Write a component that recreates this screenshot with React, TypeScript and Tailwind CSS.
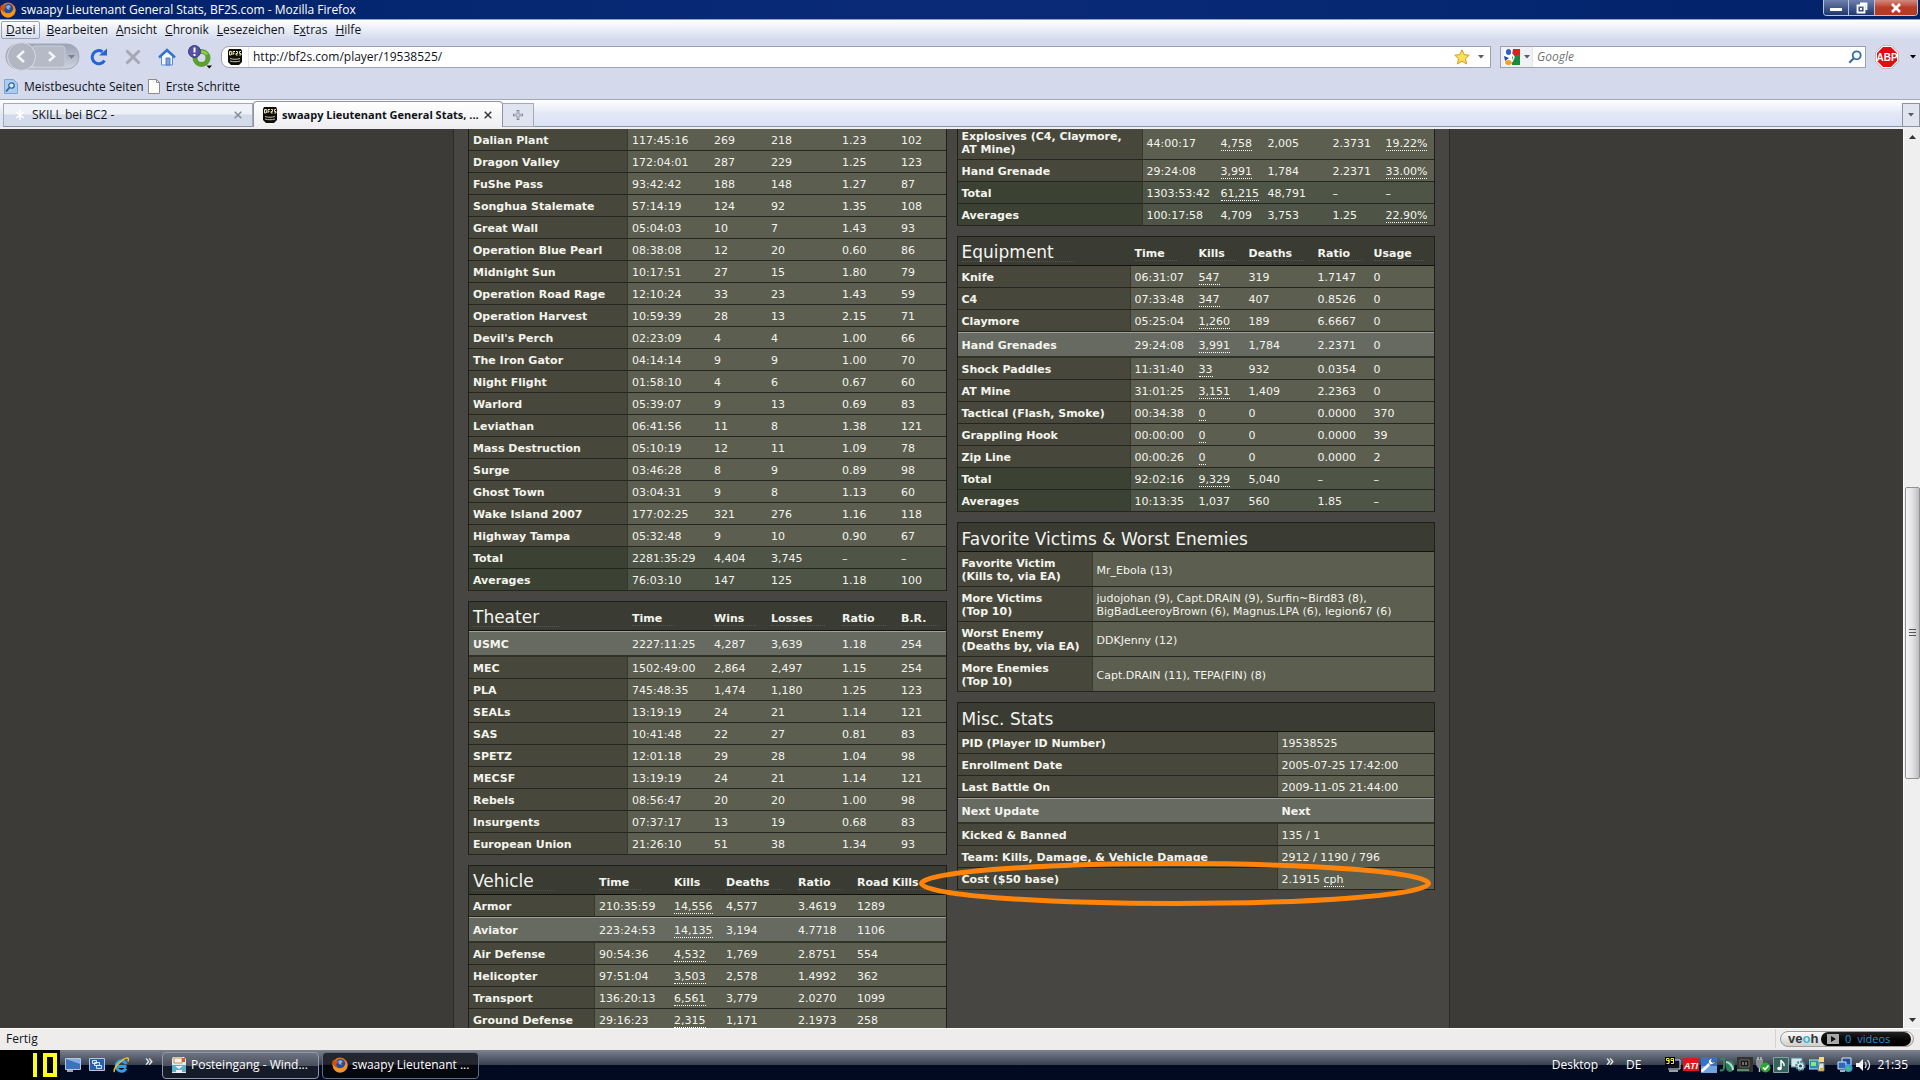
import React from "react";

type Cell = string;
type Row = { name: string; cells: Cell[]; kind?: "hot" | "sum"; linked?: number[]; bold?: boolean };

const rows = (text: string): Row[] =>
  text
    .trim()
    .split("\n")
    .map((line) => {
      const [name, ...rest] = line.trim().split("|");
      const kind = name.startsWith("*") ? "hot" : name.startsWith("+") ? "sum" : undefined;
      const linked: number[] = [];
      const cells = rest.map((c, i) => {
        if (c.startsWith("_")) {
          linked.push(i);
          return c.slice(1);
        }
        return c;
      });
      return { name: name.replace(/^[*+]/, ""), cells, kind, linked };
    });

const maps = rows(`
Dalian Plant|117:45:16|269|218|1.23|102
Dragon Valley|172:04:01|287|229|1.25|123
FuShe Pass|93:42:42|188|148|1.27|87
Songhua Stalemate|57:14:19|124|92|1.35|108
Great Wall|05:04:03|10|7|1.43|93
Operation Blue Pearl|08:38:08|12|20|0.60|86
Midnight Sun|10:17:51|27|15|1.80|79
Operation Road Rage|12:10:24|33|23|1.43|59
Operation Harvest|10:59:39|28|13|2.15|71
Devil's Perch|02:23:09|4|4|1.00|66
The Iron Gator|04:14:14|9|9|1.00|70
Night Flight|01:58:10|4|6|0.67|60
Warlord|05:39:07|9|13|0.69|83
Leviathan|06:41:56|11|8|1.38|121
Mass Destruction|05:10:19|12|11|1.09|78
Surge|03:46:28|8|9|0.89|98
Ghost Town|03:04:31|9|8|1.13|60
Wake Island 2007|177:02:25|321|276|1.16|118
Highway Tampa|05:32:48|9|10|0.90|67
+Total|2281:35:29|4,404|3,745|–|–
+Averages|76:03:10|147|125|1.18|100`);

const theater = rows(`
*USMC|2227:11:25|4,287|3,639|1.18|254
MEC|1502:49:00|2,864|2,497|1.15|254
PLA|745:48:35|1,474|1,180|1.25|123
SEALs|13:19:19|24|21|1.14|121
SAS|10:41:48|22|27|0.81|83
SPETZ|12:01:18|29|28|1.04|98
MECSF|13:19:19|24|21|1.14|121
Rebels|08:56:47|20|20|1.00|98
Insurgents|07:37:17|13|19|0.68|83
European Union|21:26:10|51|38|1.34|93`);

const vehicle = rows(`
Armor|210:35:59|_14,556|4,577|3.4619|1289
*Aviator|223:24:53|_14,135|3,194|4.7718|1106
Air Defense|90:54:36|_4,532|1,769|2.8751|554
Helicopter|97:51:04|_3,503|2,578|1.4992|362
Transport|136:20:13|_6,561|3,779|2.0270|1099
Ground Defense|29:16:23|_2,315|1,171|2.1973|258`);

const weapons = rows(`
Explosives (C4, Claymore, AT Mine)|44:00:17|_4,758|2,005|2.3731|_19.22%
Hand Grenade|29:24:08|_3,991|1,784|2.2371|_33.00%
+Total|1303:53:42|_61,215|48,791|–|–
+Averages|100:17:58|4,709|3,753|1.25|_22.90%`);

const equipment = rows(`
Knife|06:31:07|_547|319|1.7147|0
C4|07:33:48|_347|407|0.8526|0
Claymore|05:25:04|_1,260|189|6.6667|0
*Hand Grenades|29:24:08|_3,991|1,784|2.2371|0
Shock Paddles|11:31:40|_33|932|0.0354|0
AT Mine|31:01:25|_3,151|1,409|2.2363|0
Tactical (Flash, Smoke)|00:34:38|_0|0|0.0000|370
Grappling Hook|00:00:00|_0|0|0.0000|39
Zip Line|00:00:26|_0|0|0.0000|2
+Total|92:02:16|_9,329|5,040|–|–
+Averages|10:13:35|1,037|560|1.85|–`);

const victims = rows(`
Favorite Victim\\(Kills to, via EA)|Mr_Ebola (13)
More Victims\\(Top 10)|judojohan (9), Capt.DRAIN (9), Surfin~Bird83 (8),\\BigBadLeeroyBrown (6), Magnus.LPA (6), legion67 (6)
Worst Enemy\\(Deaths by, via EA)|DDKJenny (12)
More Enemies\\(Top 10)|Capt.DRAIN (11), TEPA(FIN) (8)`);

const misc = rows(`
PID (Player ID Number)|19538525
Enrollment Date|2005-07-25 17:42:00
Last Battle On|2009-11-05 21:44:00
*Next Update|Next
Kicked & Banned|135 / 1
Team: Kills, Damage, & Vehicle Damage|2912 / 1190 / 796
Cost ($50 base)|2.1915 cph`);

const lines = (t: string) =>
  t.split("\\").map((part, i) => (
    <React.Fragment key={i}>
      {i > 0 && <br />}
      {part}
    </React.Fragment>
  ));

const Dotted = ({ children }: { children: React.ReactNode }) => (
  <a href="#" className="border-b border-dotted border-white">
    {children}
  </a>
);

function cellContent(row: Row, i: number) {
  const t = row.cells[i];
  if (row.linked?.includes(i)) return <Dotted>{t}</Dotted>;
  if (t.endsWith(" cph"))
    return (
      <>
        {t.replace("cph", "")}
        <Dotted>cph</Dotted>
      </>
    );
  if (t === "Next") return <b>{t}</b>;
  return lines(t);
}

function StatTable({
  title,
  heads,
  widths,
  data,
  sortable = true,
}: {
  title?: string;
  heads?: string[];
  widths: string[];
  data: Row[];
  sortable?: boolean;
}) {
  return (
    <table className="w-full table-fixed border-separate border-spacing-0 border-x border-t border-[#1e1f1b] text-[11px] leading-[13px] text-[#f4f4ee]">
      <colgroup>
        {widths.map((w, i) => (
          <col key={i} className={w} />
        ))}
      </colgroup>
      {title && (
        <thead>
          <tr className="h-[29px] bg-[#3a3c34] text-left">
            <th
              colSpan={heads ? 1 : 2}
              className="border-b border-[#12130f] px-1 pb-[3px] align-bottom text-[17px] leading-[17px] font-normal whitespace-nowrap"
            >
              {sortable ? (
                <a href="#" className="inline-block border-b border-dotted border-[#54574d] pr-5 align-bottom">
                  {title}
                </a>
              ) : (
                title
              )}
            </th>
            {heads?.map((h) => (
              <th key={h} className="border-b border-[#12130f] pb-1 pl-1 align-bottom font-bold whitespace-nowrap">
                <a href="#" className="inline-block border-b border-dotted border-[#54574d] pr-3 align-bottom">
                  {h}
                </a>
              </th>
            ))}
          </tr>
        </thead>
      )}
      <tbody>
        {data.map((r) => {
          const hot = r.kind === "hot";
          const sum = r.kind === "sum";
          return (
            <tr key={r.name} className={hot ? "h-[26px] bg-[#676a61]" : "h-[22px]"}>
              <th
                scope="row"
                className={
                  "px-1 text-left align-middle font-bold " +
                  (hot
                    ? "border-t border-b-2 border-t-[#a0a29a] border-b-[#30322a] pt-0.5"
                    : sum
                      ? "border-r border-b border-[#23251e] border-r-[#34392d] bg-[#3b4133] pt-[5px] pb-[3px]"
                      : "border-r border-b border-[#23251e] border-r-[#373930] bg-[#47483b] pt-[5px] pb-[3px]")
                }
              >
                {lines(r.name)}
              </th>
              {r.cells.map((_, i) => (
                <td
                  key={i}
                  className={
                    "pt-0.5 pl-1 align-middle whitespace-nowrap " +
                    (hot
                      ? "border-t border-b-2 border-t-[#a0a29a] border-b-[#30322a]"
                      : sum
                        ? "border-b border-[#23251e] bg-[#4f5546]"
                        : "border-b border-[#23251e] bg-[#5c5e50]")
                  }
                >
                  {cellContent(r, i)}
                </td>
              ))}
            </tr>
          );
        })}
      </tbody>
    </table>
  );
}

const FirefoxIcon = () => (
  <svg className="size-4 shrink-0" viewBox="0 0 16 16">
    <circle cx="8" cy="8" r="7.5" fill="#e0701a" />
    <circle cx="8.4" cy="6.8" r="4.8" fill="#2a4d92" />
    <path d="M6 4l3-1 2 2-2 1 1 2-3-1z" fill="#7fb2e0" />
    <path d="M1 3c0 5 1 6 3 7 3 2 7 2 9-2 1-2 1-4 .5-5C17 7 16 13 11 15 5 17-1 12 1 3z" fill="#f39320" />
    <path d="M1 3c1 1 3 0 4 1l1 2-2 1 1 3C2 10 0 7 1 3z" fill="#d4500e" />
  </svg>
);

const SiteIcon = () => (
  <svg className="size-4 shrink-0" viewBox="0 0 16 16">
    <path d="M1 2l1-2h12l1 2v11l-3 3H4l-3-3z" fill="#0d0c06" />
    <path d="M2.500 6V2.500h2L4 4l.8 1-.8 1zM6 6V2.500h2M6 4.300h1.500M9 2.500h1.500v2H9V6h1.700M14 2.500h-1.500v2H14V6h-1.700" fill="none" stroke="#efe8b4" strokeWidth="1" />
    <path d="M3 9.500c3 1 7 1 10 0M3 12c3 1 7 1 10 0" fill="none" stroke="#d9d6c0" strokeWidth=".9" />
  </svg>
);

const Caret = ({ className = "text-[#555a66]" }: { className?: string }) => (
  <svg className={"h-1 w-1.5 shrink-0 " + className} viewBox="0 0 6 4">
    <path d="M0 0h6L3 3.500z" fill="currentColor" />
  </svg>
);

const Cross = ({ className }: { className: string }) => (
  <svg className={"size-2 " + className} viewBox="0 0 8 8">
    <path d="M.7.700l6.600 6.600M7.300.700L.7 7.300" stroke="currentColor" strokeWidth="1.500" />
  </svg>
);

function TitleBar() {
  return (
    <header className="flex h-5 shrink-0 items-start justify-between border-b border-[#8fa5cf] bg-gradient-to-r from-[#02236a] via-[#0a2a78] to-[#02236a]">
      <div className="flex items-center gap-[5px] pt-px text-[12px] leading-[18px] text-white">
        <FirefoxIcon />
        <h1>swaapy Lieutenant General Stats, BF2S.com - Mozilla Firefox</h1>
      </div>
      <div className="mr-0.5 flex h-4 overflow-hidden rounded-b border-x border-b border-[#b8c3dc]">
        <button aria-label="Minimieren" className="flex w-[25px] items-end justify-center border-r border-[#b8c3dc] bg-gradient-to-b from-[#6f80ad] to-[#1d376f] pb-1">
          <span className="h-[3px] w-3 bg-white" />
        </button>
        <button aria-label="Verkleinern" className="flex w-[26px] items-center justify-center border-r border-[#b8c3dc] bg-gradient-to-b from-[#6f80ad] to-[#1d376f]">
          <svg className="size-3" viewBox="0 0 12 12">
            <path d="M4 1.500h6.500V8M1.500 3.500h7v7h-7z" fill="none" stroke="#fff" strokeWidth="1.800" />
            <path d="M4 6h2v2H4z" fill="#fff" />
          </svg>
        </button>
        <button aria-label="Schließen" className="flex w-[42px] items-center justify-center bg-gradient-to-b from-[#d38a7f] via-[#bb3c28] to-[#b53a20] text-white">
          <svg className="h-2.5 w-3" viewBox="0 0 12 10">
            <path d="M2 1l8 8M10 1L2 9" stroke="#fff" strokeWidth="2.600" />
          </svg>
        </button>
      </div>
    </header>
  );
}

function MenuBar() {
  const items: [string, string, string][] = [
    ["", "D", "atei"],
    ["", "B", "earbeiten"],
    ["", "A", "nsicht"],
    ["", "C", "hronik"],
    ["", "L", "esezeichen"],
    ["E", "x", "tras"],
    ["", "H", "ilfe"],
  ];
  return (
    <nav className="flex h-5 items-center bg-gradient-to-b from-white via-[#e9edf7] to-[#d3d9ec] pl-px text-[12px] leading-4">
      {items.map(([a, b, c], i) => (
        <button
          key={c}
          className={
            i === 0
              ? "mr-0.5 rounded-xs border border-[#9aa0ac] px-1"
              : "px-1"
          }
        >
          {a}
          <u>{b}</u>
          {c}
        </button>
      ))}
    </nav>
  );
}

function NavBar() {
  return (
    <div className="flex h-[34px] items-center pr-1 pb-px">
      <svg className="ml-0.5 h-[30px] w-[78px] shrink-0" viewBox="0 0 78 30" role="img" aria-label="Zurück und Vor">
        <defs>
          <linearGradient id="pill" x1="0" y1="0" x2="0" y2="1">
            <stop offset="0" stopColor="#9ea3b3" />
            <stop offset=".5" stopColor="#b4b9c8" />
            <stop offset="1" stopColor="#cfd4e2" />
          </linearGradient>
        </defs>
        <rect x="4" y="2" width="73" height="25" rx="12" fill="url(#pill)" stroke="#a4a9b8" />
        <rect x="30" y="4" width="33" height="21" rx="3" fill="#b5bac7" stroke="#c6cbd8" />
        <circle cx="19.500" cy="14.500" r="14" fill="#b2b6c2" stroke="#d7dbe6" strokeWidth="1" />
        <path d="M22 9l-6 5.500 6 5.500M47 10l5 4.500-5 4.500" fill="none" stroke="#f3f5fa" strokeWidth="2.500" />
        <path d="M66 13h7l-3.500 4z" fill="#7d8292" />
      </svg>
      <button aria-label="Neu laden" className="ml-2.5">
        <svg className="size-[18px]" viewBox="0 0 18 18">
          <path d="M14.500 12.500A6.600 6.600 0 1 1 12.500 3.700" fill="none" stroke="#2464d8" strokeWidth="3" />
          <path d="M9 7.500h8V.5z" fill="#2464d8" />
        </svg>
      </button>
      <button aria-label="Stopp" className="ml-[17px]">
        <svg className="size-4" viewBox="0 0 16 16">
          <path d="M1.500 1.500l13 13M14.500 1.500l-13 13" stroke="#a5a9b4" strokeWidth="3" />
        </svg>
      </button>
      <button aria-label="Startseite" className="ml-[17px]">
        <svg className="size-[18px]" viewBox="0 0 18 18">
          <path d="M3.500 8v9h11V8L9 3.500z" fill="#f4f8fe" stroke="#5d8cc9" />
          <path d="M1 9.500L9 2l8 7.500" fill="none" stroke="#3674c9" strokeWidth="2.400" />
          <path d="M8 10h4v7H8z" fill="#7ba6dd" stroke="#3d6fb8" strokeWidth=".8" />
        </svg>
      </button>
      <button aria-label="ICQ" className="ml-3">
        <svg className="h-6 w-6" viewBox="0 0 24 24">
          <circle cx="13.500" cy="13" r="6.500" fill="none" stroke="#5aa02c" strokeWidth="5" />
          <path d="M8 9.500a7 7 0 0 1 11 0" fill="none" stroke="#8fcc4a" strokeWidth="2.500" />
          <circle cx="6.500" cy="6.500" r="6" fill="#5651a8" stroke="#3a3684" />
          <path d="M6.500 2.500v5M6.500 9v2" stroke="#fff" strokeWidth="2" />
          <path d="M18.500 20.500H24L21.200 23.500z" fill="#000" />
        </svg>
      </button>
      <div className="ml-[9px] flex h-[22px] min-w-0 flex-1 items-center rounded-l-lg border border-[#9ba1b1] bg-white pr-1.5">
        <span className="flex h-full w-[27px] items-center justify-center border-r border-[#e3e5ea]">
          <SiteIcon />
        </span>
        <input aria-label="Adresse" defaultValue="http://bf2s.com/player/19538525/" className="min-w-0 flex-1 bg-transparent pl-1 text-[12px] leading-5 outline-none" />
        <svg className="mr-2 size-4" viewBox="0 0 16 16">
          <path d="M8 .8l2.200 4.800 5 .6-3.700 3.500 1 5.200L8 12.300l-4.500 2.600 1-5.200L.8 6.200l5-.6z" fill="#fbe05a" stroke="#d59b1c" />
        </svg>
        <Caret />
      </div>
      <div className="ml-[9px] flex h-[22px] w-[366px] items-center border border-[#9ba1b1] bg-white pr-[3px]">
        <span className="flex h-full w-8 items-center gap-1 border-r border-[#e3e5ea] bg-[#f0f1f5] pl-[3px]">
          <svg className="size-4" viewBox="0 0 16 16">
            <path d="M0 0h16v16H0z" fill="#fff" />
            <path d="M9 0h7v6H8z" fill="#d8231d" />
            <path d="M9 6h7v10H8V9z" fill="#1a8a3c" />
            <path d="M0 7l5 2-4 3z" fill="#2447a8" />
            <ellipse cx="4.500" cy="3" rx="2.600" ry="3" fill="#2d62c8" />
            <ellipse cx="4.500" cy="13.500" rx="3.500" ry="2.500" fill="#f0a32a" />
            <path d="M8 5l2 3-2 5" fill="none" stroke="#fff" strokeWidth="1.500" />
          </svg>
          <Caret />
        </span>
        <input aria-label="Suche" placeholder="Google" className="min-w-0 flex-1 bg-transparent pl-1 text-[12px] leading-5 italic outline-none placeholder:text-[#6f7278]" />
        <svg className="size-[14px]" viewBox="0 0 14 14">
          <circle cx="8.700" cy="5.300" r="4" fill="#f4f8fd" stroke="#3d6c9d" strokeWidth="1.800" />
          <path d="M5.800 8.200L1.300 12.700" stroke="#3d6c9d" strokeWidth="2.200" />
        </svg>
      </div>
      <button aria-label="Adblock Plus" className="ml-[9px]">
        <svg className="size-6" viewBox="0 0 24 24">
          <path d="M7.500.5h9l7 7v9l-7 7h-9l-7-7v-9z" fill="#fff" stroke="#999" strokeWidth=".6" />
          <path d="M8 2h8l6 6v8l-6 6H8l-6-6V8z" fill="#e00d12" />
          <text x="12" y="15.500" textAnchor="middle" fontSize="10" fontWeight="bold" fill="#fff" fontFamily="Liberation Sans, sans-serif">
            ABP
          </text>
        </svg>
      </button>
      <span className="ml-[11px]">
        <Caret className="text-black" />
      </span>
    </div>
  );
}

function Bookmarks() {
  return (
    <div className="flex h-[26px] items-center border-b border-[#a3a8b6] pl-1 text-[12px] leading-4">
      <a href="#" className="flex items-center gap-1.5">
        <svg className="h-[15px] w-[14px]" viewBox="0 0 14 15">
          <path d="M.5.5h9l4 4v10H.5z" fill="#a9cdf0" stroke="#7fa5cf" />
          <circle cx="7.500" cy="6.500" r="2.700" fill="#dcecfb" stroke="#33639c" strokeWidth="1.300" />
          <path d="M5.500 8.500l-3.500 4" stroke="#33639c" strokeWidth="1.800" />
        </svg>
        Meistbesuchte Seiten
      </a>
      <a href="#" className="ml-1 flex items-center gap-1.5">
        <svg className="h-[15px] w-3" viewBox="0 0 12 15">
          <path d="M.5.5h8l3 3v11H.5z" fill="#fdfdfb" stroke="#8d8d88" />
          <path d="M8.500.5v3h3" fill="none" stroke="#8d8d88" />
        </svg>
        Erste Schritte
      </a>
    </div>
  );
}

function TabStrip() {
  return (
    <div className="flex h-[29px] items-end border-b-2 border-[#efeff2] bg-gradient-to-b from-white via-[#e3e8f6] to-[#d9e2f7] pl-[3px] text-[12px] leading-4">
      <div className="flex h-6 w-[250px] items-center border border-b-[#8e93a2] border-[#a4a9b6] bg-gradient-to-b from-[#eef1f7] from-45% to-[#d3daea] to-50% px-2">
        <svg className="size-4 text-white" viewBox="0 0 16 16">
          <path d="M8 3v10M4 5l8 6M12 5l-8 6" stroke="currentColor" strokeWidth="1.500" />
        </svg>
        <button className="flex-1 truncate pl-1 text-left">SKILL bei BC2 -</button>
        <button aria-label="Tab schließen" className="mr-0.5">
          <Cross className="text-[#858a97]" />
        </button>
      </div>
      <div className="flex h-[26px] w-[250px] items-center rounded-t-sm border-x border-t border-[#8e93a2] bg-gradient-to-b from-white to-[#efeff2] px-2">
        <SiteIcon />
        <button className="flex-1 pl-1 text-left text-[11px] font-bold whitespace-nowrap">swaapy Lieutenant General Stats, ...</button>
        <button aria-label="Tab schließen" className="mr-0.5">
          <Cross className="text-[#33363d]" />
        </button>
      </div>
      <button aria-label="Neuer Tab" className="flex h-6 w-[31px] items-center justify-center border-y border-r border-[#a4a9b6] bg-[#dfe4f0]">
        <svg className="size-2.5" viewBox="0 0 10 10">
          <path d="M5 0v10M0 5h10" stroke="#7c8190" strokeWidth="2.600" />
          <path d="M5 1v8M1 5h8" stroke="#e8eaf0" strokeWidth="1" />
        </svg>
      </button>
      <div className="h-6 flex-1 border-b border-[#8e93a2]" />
      <button aria-label="Alle Tabs" className="flex h-6 w-[18px] items-center justify-center border border-[#8e93a2] bg-[#dfe4ef]">
        <Caret />
      </button>
    </div>
  );
}

function Scrollbar() {
  return (
    <div className="flex w-[17px] shrink-0 flex-col items-center border-l border-[#fbfbfb] bg-[#efefef]">
      <button aria-label="Nach oben" className="flex h-4 items-center">
        <svg className="h-1 w-[7px]" viewBox="0 0 7 4">
          <path d="M0 4h7L3.500 0z" fill="#333" />
        </svg>
      </button>
      <div className="flex-[343]" />
      <div className="flex w-[15px] flex-[290] flex-col items-center justify-center gap-0.5 rounded-xs border border-[#919191] bg-gradient-to-r from-[#f5f5f5] via-[#e2e2e4] to-[#bcbdc0]">
        <span className="h-px w-[7px] bg-[#555]" />
        <span className="h-px w-[7px] bg-[#555]" />
        <span className="h-px w-[7px] bg-[#555]" />
      </div>
      <div className="flex-[234]" />
      <button aria-label="Nach unten" className="flex h-4 items-center">
        <svg className="h-1 w-[7px]" viewBox="0 0 7 4">
          <path d="M0 0h7L3.500 4z" fill="#333" />
        </svg>
      </button>
    </div>
  );
}

function StatusBar() {
  return (
    <footer className="flex h-[22px] shrink-0 items-center justify-between border-t border-white bg-[#efedeb] pr-1.5 pb-0.5 pl-1.5 text-[12px] leading-4">
      <span>Fertig</span>
      <div className="flex h-full items-center border-l border-[#d5d3d0] pl-1">
        <div className="flex h-4 w-[134px] items-center justify-between rounded-full border border-[#9d9d9d] bg-gradient-to-b from-[#fafafa] to-[#cfcfcf] pr-0.5 pl-[7px]">
          <span className="font-['Liberation_Sans',sans-serif] text-[13px] leading-3 font-bold text-[#333]">
            ve<span className="text-[#35b5dd]">o</span>h
          </span>
          <button className="flex h-[14px] w-[90px] items-center gap-1.5 rounded-full bg-gradient-to-b from-[#222] to-black pl-1.5 text-[11px] leading-3 text-[#2593d6]">
            <svg className="h-2.5 w-3" viewBox="0 0 12 10">
              <path d="M0 0h12v10H0z" fill="#a8a8a8" />
              <path d="M4 2l5 3-5 3z" fill="#111" />
            </svg>
            <span>0</span>
            <span>videos</span>
          </button>
        </div>
      </div>
    </footer>
  );
}

const Tray = () => (
  <div className="flex items-center gap-0.5">
    <svg className="size-4" viewBox="0 0 16 16">
      <path d="M6 3h9v9H3" fill="#11131c" stroke="#d9dde4" />
      <path d="M0 0h10v8H0z" fill="#000" />
      <path d="M4 1.500H1.500v2H4V6.500H1.500M4 1.500v4M8.500 1.500H6v2h2.500V6.500H6M8.500 1.500v4" fill="none" stroke="#f6ee3c" />
      <path d="M4 14h9" stroke="#cfd3da" strokeWidth="1.500" />
    </svg>
    <svg className="size-4" viewBox="0 0 16 16">
      <path d="M0 1h16v13H0z" fill="#e3141b" />
      <text x="8" y="11.500" fontSize="9" fontWeight="bold" fontStyle="italic" textAnchor="middle" fill="#fff" fontFamily="Liberation Sans, sans-serif">
        ATI
      </text>
    </svg>
    <svg className="size-4" viewBox="0 0 16 16">
      <path d="M0 0h16v16H0z" fill="#3573c4" />
      <path d="M0 9h16v7H0z" fill="#6fa3e2" />
      <path d="M1.500 13.500l7-6.500" fill="none" stroke="#f6f9fd" strokeWidth="3" strokeLinecap="round" />
      <path d="M14.500 4l-3 1.500-1.500-1.500L11.500 1.500C8.500 1 6.500 4 8 6.500c1.500 2 5 1.500 6.500-2.500z" fill="#f6f9fd" stroke="#2a3342" strokeWidth=".6" />
    </svg>
    <svg className="size-4" viewBox="0 0 16 16">
      <path d="M1 2h4v9c0 2-2 3-4 2" fill="none" stroke="#3e7f62" strokeWidth="2" />
      <ellipse cx="11" cy="9" rx="4.500" ry="6" fill="#2f7f5d" />
      <path d="M7 5c3 0 7 4 7 8" fill="none" stroke="#b7dccb" strokeWidth="2" />
    </svg>
    <svg className="size-4" viewBox="0 0 16 16">
      <path d="M0 0h16v15H0z" fill="#34322f" />
      <path d="M3 3h9v7H3z" fill="#171717" stroke="#6d6a64" />
      <path d="M6 5v3M9 5v3" stroke="#c9c9c9" />
      <path d="M0 13h12" stroke="#548f6d" strokeWidth="2" />
    </svg>
    <svg className="size-4" viewBox="0 0 16 16">
      <path d="M1 2h7v6l-2 3H3L1 8z" fill="#8b8d90" />
      <path d="M3 0v3M6 0v3M4.500 11v4" stroke="#bfc1c4" strokeWidth="1.500" />
      <circle cx="10.500" cy="10.500" r="5" fill="#2ca535" />
      <path d="M8 10.500l2 2 3.500-4" fill="none" stroke="#fff" strokeWidth="1.600" />
    </svg>
    <svg className="size-4" viewBox="0 0 16 16">
      <path d="M.5.5h15v15H.5z" fill="#37635f" stroke="#86a39f" />
      <path d="M8 11V3c1 3 4 2 3 6" fill="none" stroke="#fff" strokeWidth="1.500" />
      <ellipse cx="6.500" cy="11.500" rx="2.300" ry="1.800" fill="#fff" />
    </svg>
    <svg className="size-4" viewBox="0 0 16 16">
      <path d="M0 1h11v9H0z" fill="#d7e6ea" stroke="#4a8f9c" />
      <circle cx="9.500" cy="9" r="4" fill="#e9f2f4" stroke="#4f8a96" strokeWidth="2.400" strokeDasharray="2 1" />
      <circle cx="9.500" cy="9" r="1.600" fill="#1d4f5a" />
    </svg>
    <svg className="size-4" viewBox="0 0 16 16">
      <path d="M0 3h10v9H0z" fill="#2b8fb4" stroke="#bfe0ec" />
      <path d="M2 5h5v4H2z" fill="#8be08f" />
      <path d="M10 0h5v5h-5z" fill="#f3dd71" />
      <path d="M10 6h5v8h-6z" fill="#d9dfe2" stroke="#6b7b84" />
      <path d="M11 11h3v3h-3z" fill="#e8a63a" />
    </svg>
    <svg className="ml-2.5 size-4" viewBox="0 0 16 16">
      <path d="M5 1h9v7H5z" fill="#1d4f9c" stroke="#dce8f6" />
      <path d="M1 5h8v7H1z" fill="#2b68bd" stroke="#dce8f6" />
      <path d="M3 14h5" stroke="#dce8f6" strokeWidth="1.500" />
      <circle cx="11.500" cy="11" r="4" fill="#3a9be0" />
      <path d="M9 10c2-2 3 0 4 1s-1 3-3 3z" fill="#4fc05a" />
    </svg>
    <svg className="size-4" viewBox="0 0 16 16">
      <path d="M1 6h3l4-4v12l-4-4H1z" fill="#f2f4f7" />
      <path d="M10 5c1.500 2 1.500 4 0 6M12.500 3c2.500 3 2.500 7 0 10" fill="none" stroke="#e3e7ee" strokeWidth="1.200" />
    </svg>
  </div>
);

function Taskbar() {
  return (
    <div className="flex h-[30px] shrink-0 items-center bg-gradient-to-b from-[#7c828f] from-0% via-[#3a4150] via-49% to-[#010a20] to-50% text-[12px] leading-4 text-white">
      <button aria-label="Start" className="flex h-full w-[60px] items-center justify-end gap-1.5 bg-black pr-[3px]">
        <span className="h-6 w-1 bg-[#ffff14]" />
        <span className="h-6 w-[14px] border-4 border-[#ffff14]" />
      </button>
      <div className="ml-[5px] flex items-center gap-2">
        <svg className="size-4" viewBox="0 0 16 16">
          <path d="M.5 1.500h15v11H.5z" fill="#3d73bd" stroke="#b9c5d8" />
          <path d="M1 2h14v5z" fill="#86aede" />
          <path d="M2 14h6" stroke="#cfd8e6" strokeWidth="1.500" />
        </svg>
        <svg className="size-4" viewBox="0 0 16 16">
          <path d="M.5 1.500h15v12H.5z" fill="#2c5ea8" stroke="#b9c5d8" />
          <path d="M3.500 3.500h4v3h-4zM5.500 5.500h5v3h-5zM7.500 8.500h5v3h-5z" fill="#3a6db8" stroke="#e8eef7" strokeWidth=".9" />
        </svg>
        <svg className="size-4" viewBox="0 0 16 16">
          <path d="M13.500 9.500H5M13 11.500a5.200 5.200 0 1 1 .2-4.500" fill="none" stroke="#2ea0ea" strokeWidth="3" />
          <path d="M1.500 15C-.5 12 9 1 14.500 1c1.500 0 1 2 .3 3.500" fill="none" stroke="#f0c02c" strokeWidth="1.500" />
        </svg>
      </div>
      <span className="ml-4 pb-2.5 text-[16px] leading-4">»</span>
      <div className="ml-[9px] flex gap-[3px]">
        <button className="flex h-[27px] w-[157px] items-center gap-1 rounded-sm border border-[#9398a3] bg-gradient-to-b from-[#6d7380] from-0% via-[#4a505d] via-50% to-[#161b29] to-52% pl-2 whitespace-nowrap">
          <svg className="size-4 shrink-0" viewBox="0 0 16 16">
            <path d="M2 0h11l2 2v14H1V2z" fill="#d9edf6" />
            <path d="M3 1h8v5H3z" fill="#f6f3ea" stroke="#d98f4b" />
            <path d="M11 1h3v4h-3z" fill="#d6562c" />
            <path d="M1 8h14v7H1z" fill="#58b3c6" />
            <path d="M4 9h8l-4 3zM5 13h6v3H5z" fill="#e6f6fa" />
          </svg>
          Posteingang - Wind...
        </button>
        <button className="flex h-[27px] w-[157px] items-center gap-1 rounded-sm border border-[#666b78] bg-gradient-to-b from-[#23262f] from-45% to-[#05070f] to-50% pl-[9px] whitespace-nowrap">
          <FirefoxIcon />
          swaapy Lieutenant ...
        </button>
      </div>
      <div className="ml-auto flex items-center pr-3">
        <span>Desktop</span>
        <span className="ml-2 pb-2.5 text-[16px] leading-4">»</span>
        <span className="mr-6 ml-3">DE</span>
        <Tray />
        <time className="ml-1.5">21:35</time>
      </div>
    </div>
  );
}

export default function App() {
  return (
    <div className="flex h-screen flex-col overflow-hidden bg-[#3c3b37] font-['Open_Sans',sans-serif] text-[#101318]">
      <TitleBar />
      <div className="shrink-0 bg-[#d4daec]">
        <MenuBar />
        <NavBar />
        <Bookmarks />
        <TabStrip />
      </div>
      <div className="flex min-h-0 flex-1">
        <main className="min-w-0 flex-1 overflow-hidden bg-[#3c3b37] font-['DejaVu_Sans',sans-serif]">
          <div className="mx-auto grid h-full w-full max-w-[997px] grid-cols-2 gap-x-2.5 border-x border-[#2b2a27] bg-[#484643] px-3.5">
            <div className="flex flex-col gap-2.5">
              <div className="-mt-px">
                <StatTable data={maps} widths={["w-[159px]", "w-[82px]", "w-[57px]", "w-[71px]", "w-[59px]", "w-auto"]} />
              </div>
              <StatTable
                title="Theater"
                heads={["Time", "Wins", "Losses", "Ratio", "B.R."]}
                data={theater}
                widths={["w-[159px]", "w-[82px]", "w-[57px]", "w-[71px]", "w-[59px]", "w-auto"]}
              />
              <StatTable
                title="Vehicle"
                heads={["Time", "Kills", "Deaths", "Ratio", "Road Kills"]}
                data={vehicle}
                widths={["w-[126px]", "w-[75px]", "w-[52px]", "w-[72px]", "w-[59px]", "w-auto"]}
              />
            </div>
            <div className="-mt-[5px] flex flex-col gap-2.5">
              <StatTable data={weapons} widths={["w-[185px]", "w-[74px]", "w-[47px]", "w-[65px]", "w-[53px]", "w-auto"]} />
              <StatTable
                title="Equipment"
                heads={["Time", "Kills", "Deaths", "Ratio", "Usage"]}
                data={equipment}
                widths={["w-[173px]", "w-[64px]", "w-[50px]", "w-[69px]", "w-[56px]", "w-auto"]}
              />
              <StatTable title="Favorite Victims & Worst Enemies" sortable={false} data={victims} widths={["w-[135px]", "w-auto"]} />
              <div className="relative">
                <StatTable title="Misc. Stats" sortable={false} data={misc} widths={["w-[320px]", "w-auto"]} />
                <svg className="pointer-events-none absolute -bottom-4 -left-[38px] h-[45px] w-[512px]" viewBox="0 0 512 45">
                  <ellipse cx="256" cy="22.500" rx="253.500" ry="20" fill="none" stroke="#ff8409" strokeWidth="5" />
                </svg>
              </div>
            </div>
          </div>
        </main>
        <Scrollbar />
      </div>
      <StatusBar />
      <Taskbar />
    </div>
  );
}
